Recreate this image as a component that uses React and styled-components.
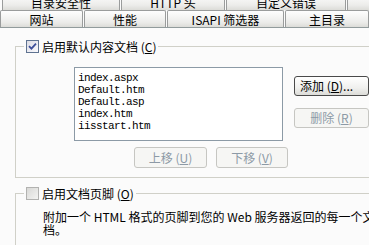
import React from 'react';
import styled, { createGlobalStyle } from 'styled-components';

const Global = createGlobalStyle`
  body { margin: 0; background: #fbfbfb; }
`;

const Dialog = styled.div`
  width: 369px;
  height: 245px;
  overflow: hidden;
  background: #fbfbfb;
  font-family: "Noto Sans CJK SC", sans-serif;
  font-size: 12px;
  color: #000;
`;

const TabStrip = styled.div`
  margin-top: -7px;
  border-bottom: 1px solid #919b9c;
`;

const TabRow = styled.div`
  display: flex;
  height: 17px;
  padding-left: ${p => p.$indent || 0}px;
  gap: ${p => p.$gap || 0}px;
`;

const Tab = styled.div`
  flex: none;
  width: ${p => p.$w}px;
  box-sizing: border-box;
  border: 1px solid #9a9c9c;
  border-bottom: none;
  border-radius: 2px 2px 0 0;
  background: linear-gradient(#fefefe, #ececea 70%, #dcdcd8);
  display: flex;
  align-items: center;
  justify-content: center;
  line-height: 15px;
  white-space: nowrap;
`;

const Body = styled.div`
  padding-left: 15px;
`;

/* legend sits at the fieldset's padding-left; content paddings below are relative to it */
const Group = styled.fieldset`
  margin: ${p => p.$top}px 0 0 0;
  padding: 0 0 0 8px;
  min-width: 0;
  height: ${p => p.$h}px;
  box-sizing: border-box;
  border: 1px solid #d0d0c8;
  border-right: none;
  ${p => p.$open && 'border-bottom: none;'}
`;

const Legend = styled.legend`
  padding: 0 2px;
  display: flex;
  align-items: center;
  gap: 3px;
  height: 13px;
  line-height: 13px;
`;

const Check = styled.span`
  width: 13px;
  height: 13px;
  box-sizing: border-box;
  border: 1px solid ${p => (p.$on ? '#5f7391' : '#b2b2b0')};
  background: ${p => (p.$on
    ? 'linear-gradient(135deg, #dcdce4, #fafafe)'
    : 'linear-gradient(135deg, #d8d8d6, #f4f4f2)')};
  display: flex;
  align-items: center;
  justify-content: center;
`;

const Row = styled.div`
  display: flex;
  padding-left: 50px;
  margin-top: 14px;
`;

const ListBox = styled.div`
  width: 217px;
  height: 74px;
  box-sizing: border-box;
  border: 1px solid #8c9aa6;
  background: #fff;
  padding: 4px 0 0 3px;
  font-family: "Liberation Mono", monospace;
  font-size: 11px;
  letter-spacing: -0.6px;
  line-height: 12px;
`;

const SideCol = styled.div`
  display: flex;
  flex-direction: column;
  gap: 12px;
  margin-left: 11px;
  padding-top: 9px;
`;

const MoveRow = styled.div`
  display: flex;
  gap: 9px;
  padding-left: 110px;
  margin-top: 6px;
`;

const Button = styled.div`
  flex: none;
  width: ${p => p.$w}px;
  height: ${p => p.$h || 20}px;
  box-sizing: border-box;
  border: 1px solid ${p => (p.$off ? '#c6c6c2' : '#4a4a4a')};
  border-radius: 3px;
  background: ${p => (p.$off ? '#f6f6f4' : 'linear-gradient(#ffffff, #f0f0ee 60%, #dcdcd8)')};
  color: ${p => (p.$off ? '#8d9aa6' : '#000')};
  display: flex;
  align-items: center;
  justify-content: ${p => (p.$left ? 'flex-start' : 'center')};
  padding-left: ${p => (p.$left ? 5 : 0)}px;
  white-space: nowrap;
  line-height: 14px;
  u { text-decoration: underline; }
`;

const Note = styled.p`
  margin: 10px 0 0 19px;
  line-height: 13px;
  white-space: nowrap;
`;

const Key = ({ k }) => (
  <>
    {' ('}
    <u>{k}</u>
    {')'}
  </>
);

const CheckMark = () => (
  <svg width="9" height="9" viewBox="0 0 9 9">
    <path d="M1 4.2 L3.4 6.6 L8 1.6" fill="none" stroke="#3d4f9a" strokeWidth="1.8" />
  </svg>
);

const files = ['index.aspx', 'Default.htm', 'Default.asp', 'index.htm', 'iisstart.htm'];

export default function App() {
  return (
    <Dialog>
      <Global />
      <TabStrip>
        <TabRow $indent={2} $gap={1}>
          <Tab $w={118}>目录安全性</Tab>
          <Tab $w={104}>HTTP 头</Tab>
          <Tab $w={120}>自定义错误</Tab>
          <Tab $w={130}>服务器扩展</Tab>
        </TabRow>
        <TabRow $gap={1}>
          <Tab $w={83}>网站</Tab>
          <Tab $w={82}>性能</Tab>
          <Tab $w={117}>ISAPI 筛选器</Tab>
          <Tab $w={84}>主目录</Tab>
        </TabRow>
      </TabStrip>
      <Body>
        <Group $top={12} $h={138}>
          <Legend>
            <Check $on><CheckMark /></Check>
            <span>启用默认内容文档<Key k="C" /></span>
          </Legend>
          <Row>
            <ListBox>
              {files.map(f => <div key={f}>{f}</div>)}
            </ListBox>
            <SideCol>
              <Button $w={75} $left>添加<Key k="D" />...</Button>
              <Button $w={75} $off>删除<Key k="R" /></Button>
            </SideCol>
          </Row>
          <MoveRow>
            <Button $w={73} $h={21} $off>上移<Key k="U" /></Button>
            <Button $w={72} $h={21} $off>下移<Key k="V" /></Button>
          </MoveRow>
        </Group>
        <Group $top={9} $h={70} $open>
          <Legend>
            <Check />
            <span>启用文档页脚<Key k="O" /></span>
          </Legend>
          <Note>
            附加一个 HTML 格式的页脚到您的 Web 服务器返回的每一个文<br />档。
          </Note>
        </Group>
      </Body>
    </Dialog>
  );
}
